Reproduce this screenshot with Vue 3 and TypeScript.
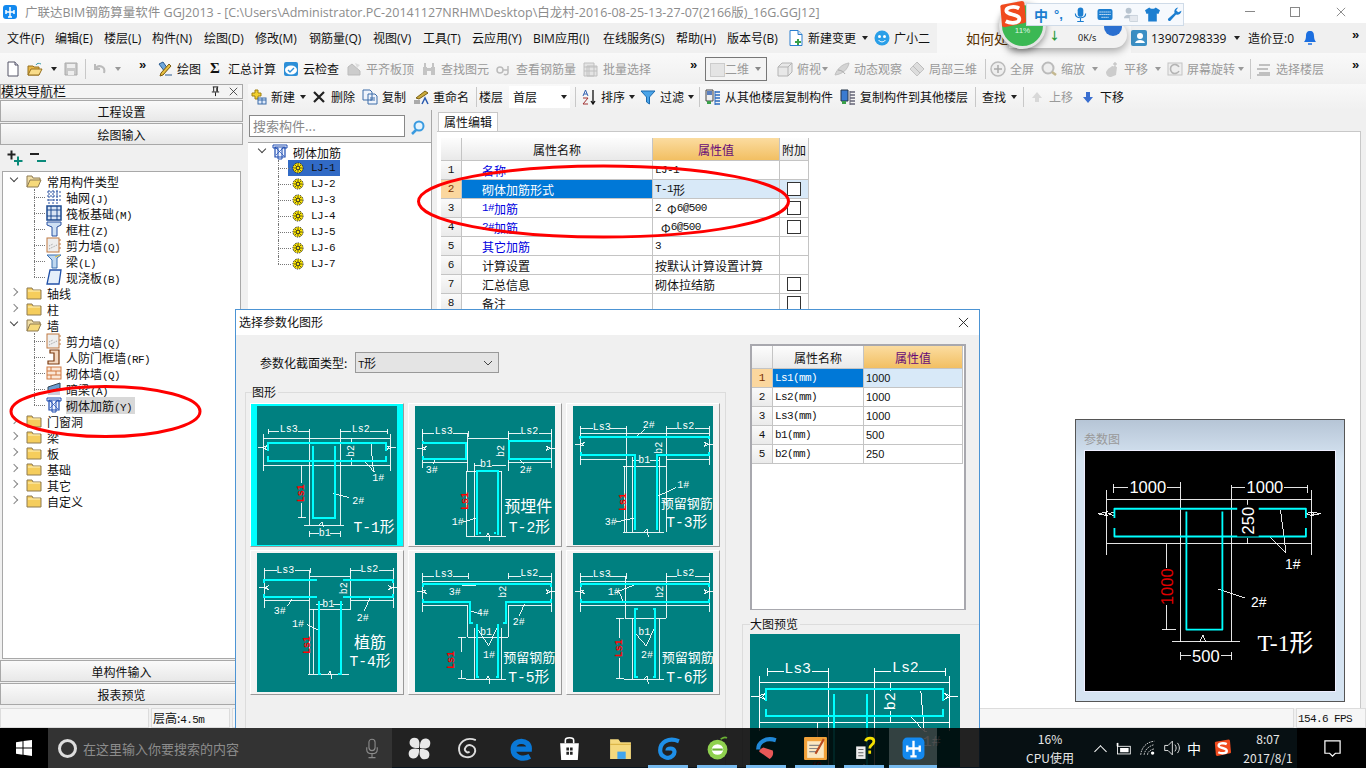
<script setup lang="ts">
interface Cell { x: number; i?: string; t?: string; c?: boolean; g?: boolean; sep?: boolean; m?: boolean; cls?: string }
function row(items: Cell[], end: number) {
  return items.map((it, n) => ({ ...it, w: (items[n + 1] ? items[n + 1].x : end) - it.x }))
}
function seg(s: string) {
  return s.split(/([\x00-\x7f]+)/).filter(Boolean).map(p => ({ t: p, l: /^[\x00-\x7f]/.test(p) }))
}
const menuLeft = ['文件(F)', '编辑(E)', '楼层(L)', '构件(N)', '绘图(D)', '修改(M)', '钢筋量(Q)', '视图(V)', '工具(T)', '云应用(Y)', 'BIM应用(I)', '在线服务(S)', '帮助(H)', '版本号(B)']
const menuX = [7, 55, 104, 152, 204, 255, 309, 373, 423, 472, 533, 603, 676, 727]
const menuCells = row([
  { x: 0 },
  ...menuLeft.map((t, n) => ({ x: menuX[n], t })),
  { x: 788, i: 'change', t: '新建变更' }, { x: 861, c: true },
  { x: 874, i: 'xiao', t: '广小二' }, { x: 937, cls: 'tip', t: '如何处' },
  { x: 1131, i: 'user', t: '13907298339' }, { x: 1233, c: true }, { x: 1248, t: '造价豆:0' },
  { x: 1302, i: 'bell' }, { x: 1352, m: true },
], 1366)
const tb1 = row([
  { x: 0 }, { x: 5, i: 'newdoc' }, { x: 27, i: 'open' }, { x: 50, c: true }, { x: 63, i: 'save', g: true }, { x: 85, sep: true },
  { x: 92, i: 'undo', g: true }, { x: 114, c: true, g: true }, { x: 139, m: true },
  { x: 157, i: 'draw', t: '绘图' }, { x: 210, cls: 'sig', t: 'Σ' }, { x: 228, t: '汇总计算' }, { x: 283, i: 'cloud', t: '云检查' },
  { x: 346, i: 'align', t: '平齐板顶', g: true }, { x: 421, i: 'find', t: '查找图元', g: true }, { x: 496, i: 'rebarv', t: '查看钢筋量', g: true },
  { x: 583, i: 'batch', t: '批量选择', g: true }, { x: 690, m: true }, { x: 705, cls: 'combo2', t: '二维', c: true },
  { x: 777, i: 'cube', t: '俯视', g: true }, { x: 821, c: true, g: true }, { x: 834, i: 'orbit', t: '动态观察', g: true }, { x: 909, i: 'part', t: '局部三维', g: true },
  { x: 985, sep: true }, { x: 990, i: 'fit', t: '全屏', g: true }, { x: 1041, i: 'zoom', t: '缩放', g: true }, { x: 1091, c: true, g: true },
  { x: 1104, i: 'pan', t: '平移', g: true }, { x: 1154, c: true, g: true }, { x: 1167, i: 'rot', t: '屏幕旋转', g: true }, { x: 1237, c: true, g: true },
  { x: 1250, sep: true }, { x: 1256, i: 'floors', t: '选择楼层', g: true }, { x: 1352, m: true },
], 1366)
const o = 248
const tb2 = row([
  { x: 0 + o }, { x: 251, i: 'newc', t: '新建' }, { x: 299, c: true }, { x: 311, i: 'del', t: '删除' }, { x: 362, i: 'copy', t: '复制' }, { x: 413, i: 'rename', t: '重命名' },
  { x: 476, sep: true }, { x: 479, t: '楼层' }, { x: 509, cls: 'combo3', t: '首层', c: true }, { x: 575, sep: true },
  { x: 581, i: 'sort', t: '排序' }, { x: 628, c: true }, { x: 640, i: 'filter', t: '过滤' }, { x: 687, c: true }, { x: 699, sep: true },
  { x: 705, i: 'cfrom', t: '从其他楼层复制构件' }, { x: 840, i: 'cto', t: '复制构件到其他楼层' }, { x: 975, sep: true },
  { x: 982, t: '查找' }, { x: 1010, c: true }, { x: 1023, sep: true }, { x: 1029, i: 'up', t: '上移', g: true }, { x: 1080, i: 'down', t: '下移' },
], 1366)
const nav = [
  { t: '常用构件类型', l: 0, i: 'fopen', open: true },
  { t: '轴网(J)', l: 1, i: 'tgrid' }, { t: '筏板基础(M)', l: 1, i: 'traft' }, { t: '框柱(Z)', l: 1, i: 'tcol' }, { t: '剪力墙(Q)', l: 1, i: 'twall' }, { t: '梁(L)', l: 1, i: 'tbeam' }, { t: '现浇板(B)', l: 1, i: 'tslab', last: true },
  { t: '轴线', l: 0, i: 'fclosed' }, { t: '柱', l: 0, i: 'fclosed' },
  { t: '墙', l: 0, i: 'fopen', open: true },
  { t: '剪力墙(Q)', l: 1, i: 'twall' }, { t: '人防门框墙(RF)', l: 1, i: 'tdoor' }, { t: '砌体墙(Q)', l: 1, i: 'tbrick' }, { t: '暗梁(A)', l: 1, i: 'tdark' }, { t: '砌体加筋(Y)', l: 1, i: 'trebar', last: true, sel: true },
  { t: '门窗洞', l: 0, i: 'fclosed' }, { t: '梁', l: 0, i: 'fclosed' }, { t: '板', l: 0, i: 'fclosed' }, { t: '基础', l: 0, i: 'fclosed' }, { t: '其它', l: 0, i: 'fclosed' }, { t: '自定义', l: 0, i: 'fclosed' },
]
const items = ['LJ-1', 'LJ-2', 'LJ-3', 'LJ-4', 'LJ-5', 'LJ-6', 'LJ-7']
const props = [
  { n: '名称', v: 'LJ-1', blue: true, ck: false },
  { n: '砌体加筋形式', v: 'T-1形', ck: true, sel: true },
  { n: '1#加筋', v: '2 Φ6@500', blue: true, ck: true },
  { n: '2#加筋', v: ' Φ6@500', blue: true, ck: true },
  { n: '其它加筋', v: '3', blue: true, ck: false },
  { n: '计算设置', v: '按默认计算设置计算', ck: false },
  { n: '汇总信息', v: '砌体拉结筋', ck: true },
  { n: '备注', v: '', ck: true },
]
const params = [['Ls1(mm)', '1000'], ['Ls2(mm)', '1000'], ['Ls3(mm)', '1000'], ['b1(mm)', '500'], ['b2(mm)', '250']]
type Tx = [string, number, number, number?, number?, string?]
const brk = (x: number, y: number, d: number) => `M${x} ${y}h${d * 14}l${d * 14} -6 ${-d * 6} 6 ${d * 6} 6 ${-d * 14} -6`
const t1 = {
  vb: '63 30 420 417',
  w: `M97 98V114M97 105H130M186 105H220M220 98V388M313 98V388M313 105H345M402 105H455M455 98V114M82 115V225M463 115V225M82 127H463M82 208H463M345 127V145M345 185V208M205 388H325M220 405V422M220 413H248M283 413H313M313 405V422M197 208V262M197 320V365M187 365H210${brk(65, 155, 1)}${brk(480, 155, -1)}M250 388l8 -10 4 14M290 292L340 305M405 145L412 225L385 196M417 225L412 225`,
  c: 'M95 165V141H450V165M95 180V195H450V180M231 150V365H297V150',
  tx: [['Ls3', 158, 100], ['Ls2', 374, 99], ['b2', 345, 165, 30, -90], ['1#', 427, 247], ['2#', 367, 316], ['b1', 266, 413], ['Ls1', 197, 292, 30, -90, 'r'], ['T-1形', 414, 395, 44]] as Tx[],
}
const thumbs = [
  t1,
  {
    vb: '537 30 420 417',
    w: `M560 105V122M560 113H595M650 113H697M697 105V122M817 105V122M817 113H855M908 113H947M947 105V122M695 127H817M695 113V225M817 113V225M560 200H695M817 200H947M560 100V215M947 100V215M715 200V420M797 225V420M690 225H797M690 420H810M690 225V420M715 207H735M768 207H810${brk(543, 157, 1)}${brk(958, 157, -1)}M750 420l8 -10 4 24M600 185L590 205M845 185L865 205M682 378L722 366`,
    c: 'M562 135V140H690V188H560V180M945 135H820V188H945M722 418V225H787V418M728 410H735M780 410H773',
    tx: [['Ls3', 623, 105], ['Ls2', 880, 105], ['3#', 587, 222], ['2#', 869, 222], ['b1', 750, 205], ['b2', 797, 165, 30, -90], ['1#', 665, 378], ['Ls1', 689, 315, 30, -90, 'r'], ['预埋件', 877, 335, 48], ['T-2形', 880, 395, 44]] as Tx[],
  },
  {
    vb: '1011 30 420 417',
    w: `M1033 90V208M1033 98H1070M1122 98H1172M1172 90V106M1290 90V106M1290 98H1322M1376 98H1420M1420 90V208M1033 112H1420M1033 190H1170M1290 190H1420M1170 98V408M1290 98V408M1160 210H1290M1160 408H1285M1190 192H1210M1242 192H1270M1190 182V408M1270 182V408M1228 100L1193 127M1320 275L1260 303M1140 378L1195 366M1165 210V408${brk(1017, 145, 1)}${brk(1432, 145, -1)}M1225 408l8 -10 4 24`,
    c: 'M1033 130V122H1420V130M1035 168V178H1197V402M1420 168V178H1262V402',
    tx: [['Ls3', 1097, 93], ['Ls2', 1348, 90], ['2#', 1238, 87], ['b1', 1225, 192], ['b2', 1272, 155, 30, -90], ['1#', 1342, 267], ['3#', 1124, 378], ['Ls1', 1162, 318, 30, -90, 'r'], ['预留钢筋', 1352, 325, 39], ['T-3形', 1352, 380, 44]] as Tx[],
  },
  {
    vb: '63 474 420 417',
    w: `M85 520V640M85 527H122M176 527H222M222 520V535M343 520V535M343 527H375M428 527H472M472 520V640M222 543H343M85 617H220M345 617H472M220 527V838M343 527V645M220 643H343M215 838H338M240 628H262M292 628H320M168 612L155 632M402 607L385 648M212 687L250 708M233 643V838${brk(70, 578, 1)}${brk(485, 578, -1)}M275 838l8 -10 4 24`,
    c: 'M85 565V554H242M85 598V607H242M322 554H472V565M322 607H472V598M248 618V836H256M315 618V836H307',
    tx: [['Ls3', 148, 525], ['Ls2', 400, 522], ['3#', 131, 648], ['2#', 380, 669], ['b1', 277, 628], ['b2', 327, 580, 30, -90], ['1#', 186, 687], ['Ls1', 214, 750, 30, -90, 'r'], ['植筋', 402, 748, 48], ['T-4形', 402, 800, 44]] as Tx[],
  },
  {
    vb: '537 474 420 417',
    w: `M560 535V650M560 543H595M650 543H697M697 535V552M817 535V552M817 543H855M908 543H947M947 535V650M560 558H947M560 630H695M817 630H947M695 630V727M817 630V727M695 727H817M715 700V852M797 700V852M690 852H810M665 727H690M665 850H690M675 727V770M675 825V850M678 572L720 570M705 648L722 654M865 628L850 662M720 695L758 752L785 695${brk(543, 590, 1)}${brk(958, 590, -1)}M750 852l8 -10 4 24`,
    c: 'M562 575V567H945V575M560 612V622H703V685H712M945 612V622H810V685H800M722 688V845H730M787 688V845H779',
    tx: [['Ls3', 623, 538], ['Ls2', 880, 535], ['3#', 656, 592], ['4#', 740, 654], ['2#', 848, 681], ['b1', 750, 712], ['b2', 803, 590, 30, -90], ['1#', 759, 780], ['Ls1', 646, 795, 30, -90, 'r'], ['预留钢筋', 880, 790, 39], ['T-5形', 878, 850, 44]] as Tx[],
  },
  {
    vb: '1011 474 420 417',
    w: `M1033 535V650M1033 543H1070M1122 543H1172M1172 535V552M1291 535V552M1291 543H1322M1376 543H1420M1420 535V650M1033 558H1420M1033 630H1420M1168 543V670M1291 543V670M1168 670H1291M1190 670V852M1270 670V852M1165 852H1285M1140 670H1165M1140 850H1165M1150 670V730M1150 790V850M1140 592L1195 570M1150 590L1160 618M1198 715L1230 752L1258 695${brk(1017, 590, 1)}${brk(1432, 590, -1)}M1225 852l8 -10 4 24`,
    c: 'M1035 575V567H1420V575M1035 612V622H1420V612M1205 642H1197V845H1205M1250 642H1258V845H1250',
    tx: [['Ls3', 1097, 538], ['Ls2', 1348, 535], ['1#', 1133, 592], ['b1', 1225, 712], ['b2', 1275, 590, 30, -90], ['2#', 1233, 780], ['Ls1', 1152, 760, 30, -90, 'r'], ['预留钢筋', 1355, 790, 39], ['T-6形', 1352, 850, 44]] as Tx[],
  },
]
const centers = [419, 467, 521, 569, 620, 668, 717, 766, 815, 864, 913]
const icons = ['kpin', 'kspiral', 'kedge', 'kstore', 'kfolder', 'kg', 'kie', 'kred', 'knote', 'khelp', 'logo']
const pins = centers.map((c, n) => ({ c, i: icons[n], on: n > 4, active: n === 10, ml: n ? c - centers[n - 1] - 48 : 3 }))
</script>

<template>
  <div class="root">
    <svg class="defs" width="0" height="0" aria-hidden="true">
      <symbol id="logo" viewBox="0 0 16 16"><rect x="1" y="1" width="14" height="14" rx="3" fill="#1389ef"/><path d="M8 3v10M4 8h8M4 6v4M12 6v4M6 13h4" stroke="#fff" stroke-width="1.500" fill="none"/></symbol>
      <symbol id="xx" viewBox="0 0 12 12"><path d="M1 1l10 10M11 1L1 11" stroke="currentColor" fill="none"/></symbol>
      <symbol id="pinic" viewBox="0 0 12 12"><path d="M3 1h6M4 1v5M8 1v5M2 6.500h8M6 7v4" stroke="#111" fill="none"/><path d="M7 2h1v4H7z" fill="#111"/></symbol>
      <symbol id="pp" viewBox="0 0 16 16"><path d="M4.500 0.500v9M0.500 4.500h8" stroke="#222" stroke-width="2" fill="none"/><path d="M11 6.500v9M7 11h8.500" stroke="#0a8a7a" stroke-width="2" fill="none"/></symbol>
      <symbol id="mm" viewBox="0 0 16 16"><path d="M0 4h9" stroke="#222" stroke-width="2"/><path d="M7 11h9" stroke="#0a8a7a" stroke-width="2"/></symbol>
      <symbol id="newdoc" viewBox="0 0 16 16"><path d="M3 1h7l3 3v11H3z" fill="#fff" stroke="#556"/><path d="M10 1v3h3" fill="#dde" stroke="#556"/></symbol>
      <symbol id="open" viewBox="0 0 16 16"><path d="M1 14V5h5l1 1h5v8z" fill="#e8b84a" stroke="#96701e"/><path d="M1 14l3-6h11l-3 6z" fill="#f8dc8a" stroke="#96701e"/><path d="M9 4c1-2 3-2 5-1" stroke="#39a" fill="none"/></symbol>
      <symbol id="save" viewBox="0 0 16 16"><path d="M2 2h12v12H2z" fill="#c8c8c8" stroke="#aaa"/><path d="M4 3h8v4H4zM5 10h6v4H5z" fill="#eee"/></symbol>
      <symbol id="undo" viewBox="0 0 16 16"><path d="M3 3v5h5M3.500 8C6 3 14 5 12 12" stroke="#bbb" stroke-width="2" fill="none"/></symbol>
      <symbol id="draw" viewBox="0 0 16 16"><path d="M2 3l4-2 5 7-3 3z" fill="#6fa8dc" stroke="#2a5a90"/><path d="M14 5L6 14l-3 1 1-3 8-9z" fill="#e8c040" stroke="#7a5a10"/><path d="M8 14h7" stroke="#2a5a90"/></symbol>
      <symbol id="cloud" viewBox="0 0 16 16"><rect x="1" y="1" width="14" height="14" rx="2" fill="#2d8fd8"/><ellipse cx="8" cy="9" rx="6" ry="4.500" fill="#fff"/><path d="M5 9l2 2 4-4" stroke="#2d8fd8" stroke-width="1.400" fill="none"/></symbol>
      <symbol id="align" viewBox="0 0 16 16"><path d="M2 14h12V10L6 3 2 6z" fill="#ccc" stroke="#bbb"/><path d="M9 2l5 2-3 3z" fill="#ddd"/></symbol>
      <symbol id="find" viewBox="0 0 16 16"><path d="M2 6h4v8H2zM10 6h4v8h-4zM3 2h2v4H3zM11 2h2v4h-2zM6 7h4v3H6z" fill="#c4c4c4"/></symbol>
      <symbol id="rebarv" viewBox="0 0 16 16"><circle cx="4" cy="9" r="3" fill="none" stroke="#bbb" stroke-width="1.500"/><path d="M7 9h5M12 5v7c0 2-3 2-4 1" stroke="#bbb" stroke-width="1.500" fill="none"/></symbol>
      <symbol id="batch" viewBox="0 0 16 16"><path d="M1 2h10v13H1zM4 5h10v10H4z" fill="#e4e4e4" stroke="#c0c0c0"/><path d="M1 6h13M1 10h13M6 5v10" stroke="#c0c0c0"/></symbol>
      <symbol id="cube" viewBox="0 0 16 16"><path d="M1 6l4-4h10v9l-4 4H1zM1 6h10v9M11 6l4-4" fill="#e8e8e8" stroke="#b4b4b4"/></symbol>
      <symbol id="orbit" viewBox="0 0 16 16"><path d="M1 14C3 8 8 3 15 2c-1 6-6 11-14 12z" fill="#d4d4d4" stroke="#c0c0c0"/><path d="M4 9c3 0 6 2 7 4" stroke="#aaa" fill="none"/></symbol>
      <symbol id="part" viewBox="0 0 16 16"><path d="M1 8l7-7 7 7-7 7z" fill="#ddd" stroke="#c4c4c4"/><path d="M4 5l7 7M8 1l7 7" stroke="#bbb"/></symbol>
      <symbol id="fit" viewBox="0 0 16 16"><circle cx="8" cy="8" r="7" fill="#eee" stroke="#bbb" stroke-width="1.500"/><path d="M8 4v8M4 8h8" stroke="#aaa" stroke-width="1.500"/></symbol>
      <symbol id="zoom" viewBox="0 0 16 16"><circle cx="7" cy="7" r="5.500" fill="#eee" stroke="#bbb" stroke-width="2"/><path d="M11 11l4 3" stroke="#c4b890" stroke-width="2.500"/></symbol>
      <symbol id="pan" viewBox="0 0 16 16"><path d="M2 11c2-4 4-4 6-6l5 1-1 8-5 2c-3 0-5-2-5-5z" fill="#ccc"/><path d="M11 1v5M9 3h4" stroke="#bbb"/></symbol>
      <symbol id="rot" viewBox="0 0 16 16"><rect x="1" y="2" width="14" height="12" fill="#eee" stroke="#c4c4c4"/><path d="M12 6a4.500 4.500 0 1 0 0 4" stroke="#b4b4b4" stroke-width="1.600" fill="none"/></symbol>
      <symbol id="floors" viewBox="0 0 16 16"><path d="M3 4h11M1 8h11M3 12h11M1 14h13" stroke="#c0c0c0" stroke-width="2"/></symbol>
      <symbol id="newc" viewBox="0 0 16 16"><path d="M1 4h3V1h3v3h3v3H7v3H4V7H1z" fill="#f2d02e" stroke="#a08010"/><rect x="7" y="9" width="8" height="6" fill="#dfeafa" stroke="#3d6ca8"/><path d="M7 11h8M11 9v6" stroke="#3d6ca8"/></symbol>
      <symbol id="del" viewBox="0 0 16 16"><path d="M3 3l10 10M13 3L3 13" stroke="#222" stroke-width="2.200"/></symbol>
      <symbol id="copy" viewBox="0 0 16 16"><path d="M1 1h7l2 2v8H1zM6 5h7l2 2v8H6z" fill="#eef3fb" stroke="#3d6ca8"/><path d="M8 9h5M8 11h5" stroke="#3d6ca8"/></symbol>
      <symbol id="rename" viewBox="0 0 16 16"><path d="M3 9l9-7 3 2-9 6z" fill="#c9a93a" stroke="#7a6015"/><rect x="1" y="11" width="6" height="4" fill="#aaa"/><path d="M9 15l3-6 3 6" stroke="#2a5bb0" stroke-width="1.500" fill="none"/></symbol>
      <symbol id="sort" viewBox="0 0 16 16"><path d="M2 7l2.500-6L7 7M3 5h3" stroke="#3060b0" fill="none"/><path d="M2 9h5l-5 6h5" stroke="#a03030" fill="none"/><path d="M12 1v13M10 12l2 3 2-3" stroke="#111" stroke-width="1.300" fill="none"/></symbol>
      <symbol id="filter" viewBox="0 0 16 16"><path d="M1 2h14L9.500 8v7L6.500 13V8z" fill="#4aa4e8" stroke="#1c6bb0"/></symbol>
      <symbol id="cfrom" viewBox="0 0 16 16"><path d="M1 1h7v11H1z" fill="#eee" stroke="#444"/><path d="M2 3h5M2 5h5" stroke="#2a5bb0" stroke-width="1.400"/><path d="M2 12h4v3H2z" fill="#3aa04a"/><path d="M10 3h5M10 6h5M10 9h5M10 12h5M10 15h5" stroke="#2a6bc0" stroke-width="1.500"/><path d="M10 2v14" stroke="#2a6bc0"/></symbol>
      <symbol id="cto" viewBox="0 0 16 16"><path d="M1 1h7v11H1z" fill="#3a7bd0" stroke="#234"/><path d="M2 12h4v3H2z" fill="#3aa04a"/><path d="M10 3h5M10 6h5M10 9h5M10 12h5M10 15h5" stroke="#667" stroke-width="1.500"/><path d="M10 2v14" stroke="#667"/></symbol>
      <symbol id="up" viewBox="0 0 16 16"><path d="M8 3l5 6h-3v4H6V9H3z" fill="#d8d8d8"/></symbol>
      <symbol id="down" viewBox="0 0 16 16"><path d="M6 3h4v5h3l-5 6-5-6h3z" fill="#3a6fd0"/></symbol>
      <symbol id="change" viewBox="0 0 16 16"><path d="M2 0.500h8l4 4V15.500H2z" fill="#fff" stroke="#2a7fd0"/><path d="M10 0.500v4h4" fill="#cde" stroke="#2a7fd0"/><path d="M9 9h2v2h2v2h-2v2H9v-2H7v-2h2z" fill="#3aa04a"/></symbol>
      <symbol id="xiao" viewBox="0 0 16 16"><circle cx="8" cy="8" r="7.500" fill="#2a9fe8"/><circle cx="5.500" cy="6.500" r="1.500" fill="#fff"/><circle cx="10.500" cy="6.500" r="1.500" fill="#fff"/><path d="M4.500 10c2 2.500 5 2.500 7 0" stroke="#fff" fill="none"/></symbol>
      <symbol id="user" viewBox="0 0 16 16"><rect width="16" height="16" rx="2" fill="#3b8fc4"/><circle cx="9" cy="6" r="3" fill="#fff"/><path d="M4 13c1-4 9-4 10 0z" fill="#fff"/></symbol>
      <symbol id="bell" viewBox="0 0 16 16"><path d="M8 1c3 0 4 2 4 5 0 3 1 5 2 6H2c1-1 2-3 2-6 0-3 1-5 4-5z" fill="#1c6fe0"/><path d="M6 14h4" stroke="#1c6fe0" stroke-width="1.500"/></symbol>
      <symbol id="search" viewBox="0 0 16 16"><circle cx="9" cy="6" r="4.500" fill="#e4f4ff" stroke="#3a9be0" stroke-width="2"/><path d="M6 10l-4 4" stroke="#3a9be0" stroke-width="2.500"/></symbol>
      <symbol id="fclosed" viewBox="0 0 16 16"><path d="M1 3h5l1 2h8v9H1z" fill="#f5cd5c" stroke="#8e7a50"/><path d="M2 6h12" stroke="#fff3c0"/></symbol>
      <symbol id="fopen" viewBox="0 0 16 16"><path d="M1 14V3h5l1 2h7v2" fill="#f2e0a8" stroke="#8e7a50"/><path d="M1 14l3-7h11l-3 7z" fill="#f6d97a" stroke="#8e7a50"/></symbol>
      <symbol id="tgrid" viewBox="0 0 16 16"><path d="M3 1v14M7 1v14M11 1v14M1 3h14M1 7h14M1 11h14" stroke="#2850a0" stroke-dasharray="2 1"/></symbol>
      <symbol id="traft" viewBox="0 0 16 16"><rect x="1" y="1" width="14" height="14" fill="#d8e4f4" stroke="#1c4a90" stroke-width="1.500"/><path d="M1 5h14M1 11h14M5 1v14M11 1v14" stroke="#1c4a90"/></symbol>
      <symbol id="tcol" viewBox="0 0 16 16"><path d="M1 1h14v3l-4 2v9H6V6L1 4z" fill="#cfe0f4" stroke="#2850a0"/></symbol>
      <symbol id="twall" viewBox="0 0 16 16"><rect x="1" y="1" width="12" height="14" fill="#eee" stroke="#c07840"/><path d="M3 12l8-4M3 9l4-2" stroke="#999" stroke-dasharray="1 1"/><path d="M13 3h2M13 7h2M13 11h2" stroke="#c07840"/></symbol>
      <symbol id="tbeam" viewBox="0 0 16 16"><path d="M1 2h14l-4 3v10H6V7z" fill="#bfd8f0" stroke="#3a70b0"/><path d="M9 4l5-2" stroke="#ddc040"/></symbol>
      <symbol id="tslab" viewBox="0 0 16 16"><path d="M4 1h11l-2 14H1z" fill="#e4effa" stroke="#2050a8" stroke-width="1.300"/></symbol>
      <symbol id="tdoor" viewBox="0 0 16 16"><path d="M4 1h9v14H2v-3h6V4H4z" fill="#f4d8c0" stroke="#7a3a10" stroke-width="1.200"/></symbol>
      <symbol id="tbrick" viewBox="0 0 16 16"><rect x="1" y="2" width="14" height="12" fill="#fbe8d8" stroke="#d07840"/><path d="M1 6h14M1 10h14M5 2v4M10 6v4M5 10v4" stroke="#d07840"/></symbol>
      <symbol id="tdark" viewBox="0 0 16 16"><path d="M2 6l12-4v5L2 11z" fill="#6a9cd0" stroke="#345"/><path d="M2 11l12-4v7H2z" fill="#ccd"/></symbol>
      <symbol id="trebar" viewBox="0 0 16 16"><path d="M3 3h10v10H3z" fill="#eef4ff" stroke="#1c4ab0" stroke-width="1.200"/><path d="M1 1h14v3H10v11H6V4H1z" fill="none" stroke="#1c4ab0"/><path d="M3 3l9 9M12 3L4 11" stroke="#1c4ab0" stroke-width="0.700"/></symbol>
      <symbol id="gear" viewBox="0 0 12 12"><circle cx="6" cy="6" r="5" fill="#ffe800" stroke="#222" stroke-dasharray="1.500 1"/><path d="M2 6h8M6 2v8M3 3l6 6M9 3L3 9" stroke="#222" stroke-width="0.700"/><circle cx="6" cy="6" r="1.800" fill="#ffe800" stroke="#222" stroke-width="0.800"/></symbol>
      <symbol id="mic" viewBox="0 0 16 24"><rect x="4.500" y="2" width="7" height="13" rx="3.500" fill="none" stroke="#8a8a8a" stroke-width="1.300"/><path d="M2 11v3c0 6 12 6 12 0v-3M8 19v4M4 23h8" stroke="#8a8a8a" stroke-width="1.300" fill="none"/></symbol>
      <symbol id="kpin" viewBox="0 0 24 24"><path d="M11.500 11.500C6 12 2 10 2.500 5.500S8 1 10 2.500s2.500 5 1.500 9zM12.500 11.500C12 6 14 2 18.500 2.500S23 8 21.500 10s-5 2.500-9 1.500zM12.500 12.500C18 12 22 14 21.500 18.500S16 23 14 21.500s-2.500-5-1.500-9zM11.500 12.500C12 18 10 22 5.500 21.500S1 16 2.500 14s5-2.500 9-1.500z" fill="#e8e8e8"/></symbol>
      <symbol id="kspiral" viewBox="0 0 24 24"><path d="M20 4C10 0 3 7 4 14c1 7 12 9 15 2 2-6-6-10-9-5-2 3 2 6 4 4" stroke="#ddd" stroke-width="1.800" fill="none"/></symbol>
      <symbol id="kedge" viewBox="0 0 24 24"><path d="M4 12.500h15.500C20 3 4 2 4 13c0 8 10 10 16 6.500" stroke="#0a78d6" stroke-width="5" fill="none"/></symbol>
      <symbol id="kstore" viewBox="0 0 24 24"><path d="M3 7h18l-1 16H4z" fill="#fff"/><path d="M8 7V4c0-3 8-3 8 0v3" stroke="#fff" stroke-width="1.500" fill="none"/><path d="M9 11h2.500v3H9zM12.500 11H15v3h-2.500zM9 15h2.500v3H9zM12.500 15H15v3h-2.500z" fill="#222"/></symbol>
      <symbol id="kfolder" viewBox="0 0 24 24"><path d="M2 3h8l2 3h10v16H2z" fill="#f5d97e"/><path d="M2 8h20" stroke="#d8b040"/><rect x="9" y="15" width="8" height="7" fill="#41a5ee"/></symbol>
      <symbol id="kg" viewBox="0 0 24 24"><path d="M22 5C12 1 4 6 4 14c0 6 8 9 12 5 3-3 2-7-2-7-2 0-3 1-3 2" stroke="#1e8fe8" stroke-width="4" fill="none"/></symbol>
      <symbol id="kie" viewBox="0 0 24 24"><circle cx="12" cy="13" r="9.500" fill="#8fd14f"/><ellipse cx="12" cy="13" rx="5.500" ry="5" fill="#fff"/><path d="M7 13h10" stroke="#6ab034" stroke-width="2"/><path d="M15 3c3-2 5-2 6-1" stroke="#6ab034" stroke-width="1.500" fill="none"/></symbol>
      <symbol id="kred" viewBox="0 0 24 24"><path d="M21 4C11 1 4 6 4 13" stroke="#2088d8" stroke-width="4" fill="none"/><path d="M5 15l10 7c3-2 4-5 3-8l-9-3c-2 1-4 2-4 4z" fill="#e85858"/></symbol>
      <symbol id="knote" viewBox="0 0 24 24"><rect x="1" y="1" width="22" height="22" rx="1" fill="#f2a23a"/><rect x="4" y="5" width="16" height="16" fill="#fae7c2"/><path d="M6 9h10M6 12h10M6 15h8" stroke="#888"/><path d="M20 3L12 17" stroke="#b84a20" stroke-width="2"/></symbol>
      <symbol id="khelp" viewBox="0 0 24 24"><rect x="4" y="10" width="9" height="12" fill="#eee"/><path d="M6 13h5M6 16h5M6 19h5" stroke="#666"/><path d="M13 5c1-4 8-4 8 0s-4 3-4 7M17 14v3" stroke="#f5e000" stroke-width="2.600" fill="none"/></symbol>
      <symbol id="win" viewBox="0 0 16 16"><path d="M0 2.300l6.500-1v6.200H0zM7.500 1.100L16 0v7.500H7.500zM0 8.500h6.500v6.200l-6.500-1zM7.500 8.500H16V16l-8.500-1.200z" fill="#fff"/></symbol>
      <symbol id="batt" viewBox="0 0 20 20"><path d="M3 4v4" stroke="#fff" stroke-width="2"/><rect x="3" y="8" width="15" height="9" fill="none" stroke="#fff"/><rect x="6" y="10" width="10" height="5" fill="#fff"/></symbol>
      <symbol id="wifi" viewBox="0 0 20 20"><path d="M2 18C3 9 9 3 18 2M6 18c1-6 5-10 12-12M10 18c0-3 3-6 8-7" stroke="#e4e4e4" fill="none" stroke-dasharray="2 1"/><circle cx="16" cy="16" r="2" fill="#fff"/></symbol>
      <symbol id="snd" viewBox="0 0 20 20"><path d="M2 7h4l5-5v16l-5-5H2z" fill="none" stroke="#fff"/><path d="M14 6c2 3 2 5 0 8M17 4c3 4 3 8 0 12" stroke="#fff" fill="none"/></symbol>
      <symbol id="notif" viewBox="0 0 20 20"><path d="M2 2h16v13H13l-3 3-3-3H2z" fill="none" stroke="#fff" stroke-width="1.300"/></symbol>
      <symbol id="sg" viewBox="0 0 20 20"><path d="M1 4q0-1 1-1.300L17 0q1.500 0 1.800 1.500L20 15q0 1-1 1.300L4 19.500q-1.500 0-1.800-1.500z" fill="#f04a1e"/><path d="M15 5.500C11 3.500 5 4.500 5.500 7.500s9 2 9.500 5.500-6 4-10 2" stroke="#fff" stroke-width="2.800" fill="none"/></symbol>
      <symbol id="imic" viewBox="0 0 14 16"><rect x="4" y="0.500" width="6" height="10" rx="3" fill="#1c7ed0"/><path d="M1.500 7c0 6 11 6 11 0M7 12v3M3.500 15.500h7" stroke="#1c7ed0" stroke-width="1.200" fill="none"/></symbol>
      <symbol id="ikbd" viewBox="0 0 16 12"><rect x="0.500" y="0.500" width="15" height="11" rx="2" fill="#1c7ed0"/><path d="M2.500 3.500h11M2.500 6h11M4.500 8.800h7" stroke="#fff" stroke-dasharray="1.200 0.800"/></symbol>
      <symbol id="iper" viewBox="0 0 16 16"><circle cx="6" cy="4" r="3.200" fill="#b8c4d0"/><path d="M1 12c0-5 9-5 10 0z" fill="#b8c4d0"/><rect x="7" y="9" width="9" height="6.500" rx="1" fill="#e4e8ee" stroke="#b8c4d0" stroke-width="0.700"/></symbol>
      <symbol id="ishirt" viewBox="0 0 14 14"><path d="M4 0.500L0 3l1.500 3.500L3 6v7.500h8V6l1.500 0.500L14 3 10 0.500C9 2 5 2 4 0.500z" fill="#1c7ed0"/></symbol>
      <symbol id="iwr" viewBox="0 0 14 14"><path d="M13.500 3.500A3.800 3.800 0 0 1 8.500 7L3 13a1.500 1.500 0 0 1-2-2l6-5.500A3.800 3.800 0 0 1 10.500 0.500L8.500 3l2 2z" fill="#1c7ed0"/></symbol>
    </svg>

    <div class="title"><svg class="ic"><use href="#logo"/></svg><span>广联达BIM钢筋算量软件 GGJ2013 - [C:\Users\Administrator.PC-20141127NRHM\Desktop\白龙村-2016-08-25-13-27-07(2166版)_16G.GGJ12]</span>
      <div class="wbtns"><i class="wmin"></i><i class="wmax"></i><svg class="xbtn"><use href="#xx"/></svg></div>
    </div>
    <div class="bar menu">
      <div v-for="(it, k) in menuCells" :key="k" class="cell" :class="it.cls" :style="{ width: it.w + 'px' }">
        <svg v-if="it.i" class="ic"><use :href="'#' + it.i"/></svg><span v-if="it.t">{{ it.t }}</span><i v-if="it.c" class="caret"></i><b v-if="it.m" class="more">»</b>
      </div>
    </div>
    <div class="bar tb1">
      <div v-for="(it, k) in tb1" :key="k" class="cell" :class="[it.cls, { g: it.g }]" :style="{ width: it.w + 'px' }">
        <svg v-if="it.i" class="ic"><use :href="'#' + it.i"/></svg><span v-if="it.t">{{ it.t }}</span><i v-if="it.c" class="caret"></i><i v-if="it.sep" class="sep"></i><b v-if="it.m" class="more">»</b>
      </div>
    </div>

    <div class="main">
      <aside class="nav">
        <div class="navhead"><span>模块导航栏</span><svg class="navpin"><use href="#pinic"/></svg><svg class="navx"><use href="#xx"/></svg></div>
        <button class="navbtn">工程设置</button>
        <button class="navbtn">绘图输入</button>
        <div class="pm"><svg class="ic"><use href="#pp"/></svg><svg class="ic"><use href="#mm"/></svg></div>
        <div class="navtree">
          <div v-for="(r, k) in nav" :key="k" class="nrow" :class="[r.l ? 'child' : 'top', { last: r.last }]">
            <i v-if="!r.l" class="chev" :class="{ open: r.open }"></i>
            <svg class="ic"><use :href="'#' + r.i"/></svg>
            <span class="lab" :class="{ sel: r.sel }"><span v-for="(s, m) in seg(r.t)" :key="m" :class="{ la: s.l }">{{ s.t }}</span></span>
          </div>
        </div>
        <button class="navbtn">单构件输入</button>
        <button class="navbtn">报表预览</button>
      </aside>
      <section class="work">
        <div class="bar tb2">
          <div v-for="(it, k) in tb2" :key="k" class="cell" :class="[it.cls, { g: it.g }]" :style="{ width: it.w + 'px' }">
            <svg v-if="it.i" class="ic"><use :href="'#' + it.i"/></svg><span v-if="it.t">{{ it.t }}</span><i v-if="it.c" class="caret"></i><i v-if="it.sep" class="sep"></i>
          </div>
        </div>
        <div class="workbody">
          <div class="list">
            <div class="searchrow"><div class="search">搜索构件...</div><svg class="ic mag"><use href="#search"/></svg></div>
            <div class="ltree">
              <div class="lroot"><i class="chev open"></i><svg class="ic"><use href="#trebar"/></svg><span>砌体加筋</span></div>
              <div v-for="(n, k) in items" :key="n" class="litem" :class="{ on: k === 0, last: k === 6 }">
                <svg class="gear"><use href="#gear"/></svg><span class="la">{{ n }}</span>
              </div>
            </div>
          </div>
          <div class="props">
            <div class="tabs"><span class="tab">属性编辑</span></div>
            <div class="pane">
              <div class="grid pgrid">
                <div class="gh"></div><div class="gh">属性名称</div><div class="gh val">属性值</div><div class="gh">附加</div>
                <template v-for="(p, k) in props" :key="k">
                  <div class="gc num" :class="{ hot: p.sel }">{{ k + 1 }}</div>
                  <div class="gc name" :class="{ blue: p.blue, picked: p.sel }"><span v-for="(s, m) in seg(p.n)" :key="m" :class="{ la: s.l }">{{ s.t }}</span></div>
                  <div class="gc value" :class="{ pale: p.sel }"><span v-for="(s, m) in seg(p.v)" :key="m" :class="{ la: s.l }">{{ s.t }}</span></div>
                  <div class="gc add" :class="{ pale: p.sel }"><i v-if="p.ck" class="chk"></i></div>
                </template>
              </div>
            </div>
          </div>
        </div>
      </section>
    </div>

    <div class="status">
      <div class="st s1"></div><div class="st s2">层高:<span class="la">4.5m</span></div><div class="st s3"></div><div class="st s4"><span class="la">154.6 FPS</span></div>
    </div>

    <div class="taskbar">
      <div class="start"><svg class="win"><use href="#win"/></svg></div>
      <div class="cortana"><i class="ring"></i><span>在这里输入你要搜索的内容</span><svg class="micic"><use href="#mic"/></svg></div>
      <div class="pins">
        <div v-for="p in pins" :key="p.c" class="pinc" :class="{ on: p.on, active: p.active }" :style="{ marginLeft: p.ml + 'px' }"><svg class="pinic"><use :href="'#' + p.i"/></svg></div>
      </div>
      <div class="tray">
        <div class="cpu"><span>16%</span><span>CPU使用</span></div>
        <i class="upchev"></i>
        <svg class="tr"><use href="#batt"/></svg><svg class="tr"><use href="#wifi"/></svg><svg class="tr"><use href="#snd"/></svg>
        <span class="zh">中</span>
        <svg class="tr"><use href="#sg"/></svg>
        <div class="clock"><span>8:07</span><span>2017/8/1</span></div>
      </div>
      <div class="notif"><svg class="tr"><use href="#notif"/></svg></div>
    </div>

    <div class="dialog">
      <div class="dtitle"><span>选择参数化图形</span><svg class="dx"><use href="#xx"/></svg></div>
      <div class="dbody">
        <div class="dleft">
          <div class="dsel"><span class="dlabel">参数化截面类型:</span><div class="select"><span class="seltxt"><span class="la">T</span>形</span><svg width="10" height="6" viewBox="0 0 10 6"><path d="M1 1l4 4 4-4" stroke="#444" fill="none"/></svg></div></div>
          <div class="shapes">
            <span class="glabel">图形</span>
            <div class="tgrid">
              <div v-for="(t, k) in thumbs" :key="k" class="tcell" :class="{ chosen: k === 0 }">
                <svg class="th" :viewBox="t.vb">
                  <path :d="t.w" class="wl"/><path :d="t.c" class="cy"/>
                  <text v-for="(x, m) in t.tx" :key="m" :x="x[1]" :y="x[2]" :font-size="x[3] || 30" text-anchor="middle" dominant-baseline="central" :fill="x[5] ? '#f00' : '#fff'" :font-weight="x[5] ? 700 : 400" :transform="x[4] ? `rotate(${x[4]} ${x[1]} ${x[2]})` : undefined">{{ x[0] }}</text>
                </svg>
              </div>
            </div>
          </div>
        </div>
        <div class="dright">
          <div class="pframe">
            <div class="grid dgrid">
              <div class="gh"></div><div class="gh">属性名称</div><div class="gh val">属性值</div>
              <template v-for="(p, k) in params" :key="k">
                <div class="gc num" :class="{ hot: k === 0 }">{{ k + 1 }}</div>
                <div class="gc dn" :class="{ picked: k === 0 }"><span class="la">{{ p[0] }}</span></div>
                <div class="gc dv" :class="{ pale: k === 0 }">{{ p[1] }}</div>
              </template>
            </div>
          </div>
          <div class="bigbox">
            <span class="glabel big">大图预览</span>
            <svg class="bigth" :viewBox="t1.vb">
              <path :d="t1.w" class="wl"/><path :d="t1.c" class="cy"/>
              <text v-for="(x, m) in t1.tx" :key="m" :x="x[1]" :y="x[2]" :font-size="x[3] || 30" text-anchor="middle" dominant-baseline="central" :fill="x[5] ? '#f00' : '#fff'" :transform="x[4] ? `rotate(${x[4]} ${x[1]} ${x[2]})` : undefined">{{ x[0] }}</text>
            </svg>
          </div>
        </div>
      </div>
    </div>

    <div class="pwin">
      <div class="ptitle">参数图</div>
      <svg class="canvas" viewBox="42 122 755 727">
        <path class="pw" d="M127 222V250M127 232H172M290 232H331M331 215V700M485 225V700M485 232H525M645 232H716M716 225V250M107 240V437M727 240V437M107 268H727M107 403H727M288 405V475M288 590V663M275 663H315M305 700H510M388 700l10 -20 8 20M331 742H362M452 742H485M331 730V755M485 730V755M633 300L650 432L600 380M445 540L525 567M80 312l30 -6 -10 6 10 6 -30 -6M112 312l18 -6V318zM755 312l-30 -6 10 6 -10 6 30 -6M710 312l18 -6V318zM534 270V285M534 385V403"/>
        <path class="pc" d="M130 325V297H710V325M130 355V381H710V355M348 305V663H457V305"/>
        <rect x="502" y="285" width="65" height="96" fill="#000"/>
        <text x="231" y="231" class="pt" font-size="50">1000</text>
        <text x="586" y="231" class="pt" font-size="50">1000</text>
        <text x="535" y="333" class="pt" font-size="50" transform="rotate(-90 535 333)">250</text>
        <text x="670" y="465" class="pt" font-size="42">1#</text>
        <text x="567" y="578" class="pt" font-size="42">2#</text>
        <text x="288" y="533" class="pt red" font-size="50" transform="rotate(-90 288 533)">1000</text>
        <text x="407" y="742" class="pt" font-size="50">500</text>
        <text x="648" y="705" class="pt ser" font-size="72">T-1形</text>
      </svg>
    </div>

    <div class="ime">
      <div class="pill"><span class="arrow">↓</span><span class="speed">0K/s</span><i class="bluedot"></i></div>
      <div class="ball"><span>11%</span></div>
      <div class="imebar"><b class="cn">中</b><span class="imei">°,</span><svg class="ii mic"><use href="#imic"/></svg><svg class="ii kb"><use href="#ikbd"/></svg><svg class="ii"><use href="#iper"/></svg><svg class="ii"><use href="#ishirt"/></svg><svg class="ii"><use href="#iwr"/></svg></div>
      <svg class="slogo" viewBox="0 0 20 20"><use href="#sg"/></svg>
    </div>

    <svg class="rings" width="1366" height="768" viewBox="0 0 1366 768">
      <ellipse cx="603.500" cy="201.500" rx="185" ry="35.500"/>
      <ellipse cx="105.500" cy="411.500" rx="94.500" ry="25"/>
    </svg>
  </div>
</template>

<style>
html, body { margin: 0; background: #f0f0f0; }
</style>

<style scoped>
.root { width: 1366px; height: 768px; position: relative; overflow: hidden; display: flex; flex-direction: column; background: #f0f0f0; font: 12px "Open Sans", "Noto Sans CJK SC", sans-serif; color: #111; }
.defs { position: absolute; }
.ic { width: 16px; height: 16px; flex: none; }
.la { font: 11px "Liberation Mono", monospace; letter-spacing: -.6px; }
.title { height: 23px; background: #fff; display: flex; align-items: center; gap: 7px; padding-left: 2px; color: #8c8c8c; font-size: 12.500px; white-space: nowrap; }
.wbtns { margin-left: auto; display: flex; align-items: center; color: #777; padding-right: 20px; }
.wmin { width: 10px; height: 1px; background: #888; margin-right: 35px; flex: none; }
.wmax { width: 8px; height: 8px; border: 1px solid #888; margin-right: 36px; flex: none; }
.xbtn { width: 10px; height: 10px; color: #777; }
.bar { display: flex; align-items: center; flex: none; }
.menu { height: 30px; background: #f0f0f0; }
.tb1 { height: 31px; background: linear-gradient(#f9f9f9, #f0f0f0); }
.tb2 { height: 26px; background: linear-gradient(#f9f9f9, #f0f0f0); }
.cell { display: flex; align-items: center; gap: 4px; height: 100%; flex: none; white-space: nowrap; position: relative; }
.cell.g { color: #9a9a9a; }
.caret { width: 0; height: 0; border: 3px solid transparent; border-top: 4px solid #222; border-bottom: 0; margin-left: 1px; }
.g .caret { border-top-color: #999; }
.sep { width: 1px; height: 20px; background: #c8c8c8; }
.more { font: 700 13px "Liberation Sans", sans-serif; margin-top: -8px; }
.tip { background: #f8f8f8; color: #5a3000; padding-left: 29px; box-sizing: border-box; font-size: 14px; }
.sig { font: 700 15px "Liberation Serif", serif; }
.combo2 { height: 24px; border: 1px solid #777; box-sizing: border-box; width: 62px !important; margin-right: 10px; padding-left: 19px; color: #999; background: #f4f4f4; }
.combo2::before { content: ""; position: absolute; left: 4px; top: 5px; width: 13px; height: 12px; background: #e4e4e4; border: 1px solid #ccc; }
.combo2 .caret { margin-left: 2px; border-top-color: #888; }
.combo3 { height: 22px; background: #fff; width: 61px !important; margin-right: 5px; box-sizing: border-box; padding-left: 4px; }
.combo3 .caret { margin-left: 20px; }
.main { height: 624px; display: flex; flex: none; }
.nav { width: 243px; flex: none; display: flex; flex-direction: column; padding-bottom: 3px; box-sizing: border-box; }
.navhead { height: 15px; border: 1px solid #a8a8a8; box-sizing: border-box; display: flex; align-items: center; font-size: 13px; line-height: 13px; background: #f4f4f4; flex: none; }
.navpin { width: 11px; height: 11px; margin-left: auto; margin-right: 8px; }
.navx { width: 9px; height: 9px; margin-right: 4px; color: #222; }
.navbtn { height: 22px; margin: 1px 0 0; border: 1px solid #a8a8a8; background: linear-gradient(#fafafa, #e8e8e8); font: 12px "Noto Sans CJK SC", sans-serif; padding: 0; color: #111; flex: none; }
.pm { height: 26px; display: flex; align-items: center; gap: 7px; padding-left: 7px; flex: none; }
.navtree { flex: 1; margin: 0 2px 0 2px; border: 1px solid #a8a8a8; background: #fff; padding-top: 1px; overflow: hidden; font-family: "Noto Sans CJK SC", sans-serif; }
.nrow { height: 16px; display: flex; align-items: center; position: relative; white-space: nowrap; }
.nrow.top { padding-left: 23px; }
.nrow.top .lab { margin-left: 5px; }
.nrow.child { padding-left: 43px; }
.nrow.child .lab { margin-left: 4px; }
.nrow.child::before { content: ""; position: absolute; left: 31px; top: 0; bottom: 0; border-left: 1px dotted #777; }
.nrow.child.last::before { bottom: 8px; }
.nrow.child::after { content: ""; position: absolute; left: 31px; top: 8px; width: 11px; border-top: 1px dotted #777; }
.nrow .lab.sel { background: #d8d8d8; padding-right: 3px; }
.chev { position: absolute; left: 8px; top: 4px; width: 5px; height: 5px; border-right: 1.500px solid #888; border-bottom: 1.500px solid #888; transform: rotate(-45deg); }
.chev.open { transform: rotate(45deg); top: 2px; border-color: #444; }
.work { flex: 1; display: flex; flex-direction: column; margin-left: 5px; min-width: 0; }
.workbody { display: flex; flex: 1; min-height: 0; }
.list { width: 183px; flex: none; font-family: "Noto Sans CJK SC", sans-serif; display: flex; flex-direction: column; border-right: 1px solid #a8a8a8; background: #f4f4f4; }
.searchrow { height: 32px; display: flex; align-items: center; gap: 4px; padding-left: 1px; background: #f0f0f0; }
.search { width: 156px; height: 22px; border: 1px solid #888; box-sizing: border-box; background: #fff; color: #888; font-size: 13px; line-height: 20px; padding-left: 3px; }
.mag { margin: 4px 0 0 1px; }
.ltree { flex: 1; background: #fff; border-top: 1px solid #a8a8a8; padding-top: 1px; }
.lroot { height: 16px; display: flex; align-items: center; position: relative; padding-left: 24px; gap: 5px; }
.lroot .chev { left: 11px; }
.litem { height: 16px; display: flex; align-items: center; position: relative; padding-left: 44px; gap: 7px; }
.litem .gear { width: 12px; height: 12px; }
.litem::before { content: ""; position: absolute; left: 30px; top: 0; bottom: 0; border-left: 1px dotted #777; }
.litem.last::before { bottom: 8px; }
.litem::after { content: ""; position: absolute; left: 30px; top: 8px; width: 13px; border-top: 1px dotted #777; }
.litem.on { background: linear-gradient(#316ac5, #316ac5) 40px 0 / 52px 16px no-repeat; }
.props { flex: 1; display: flex; flex-direction: column; margin-left: 5px; min-width: 0; }
.tabs { height: 21px; display: flex; align-items: flex-end; padding: 0 0 0 1px; }
.tab { height: 19px; width: 60px; box-sizing: border-box; border: 1px solid #c8c8c8; border-bottom: 0; background: #fff; text-align: center; line-height: 18px; font-family: "Noto Sans CJK SC", sans-serif; }
.pane { flex: 1; background: #fff; margin-right: 5px; border: 1px solid #c8c8c8; border-width: 1px 1px 0 0; padding: 6px 0 0 4px; }
.grid { display: grid; font-family: "Noto Sans CJK SC", sans-serif; background: #fff; }
.pgrid { grid-template-columns: 21px 191px 127px 29px; width: 368px; grid-auto-rows: 19px; grid-template-rows: 23px; }
.gh { background: linear-gradient(#fdfdfd, #e9e9e9); border-right: 1px solid #c4c4c4; border-bottom: 1px solid #c4c4c4; display: flex; align-items: center; justify-content: center; }
.gh.val { background: linear-gradient(#fbdca0, #f2bf62); color: #660a78; }
.gc { border-right: 1px solid #c4c4c4; border-bottom: 1px solid #c4c4c4; display: flex; align-items: center; white-space: pre; overflow: hidden; }
.num { background: linear-gradient(#fafafa, #eaeaea); justify-content: center; font: 11px "Liberation Mono", monospace; }
.num.hot { background: #fbd79e; color: #7a3000; }
.name { padding-left: 20px; }
.name.blue { color: #0000e0; }
.picked { background: #0078d7; color: #fff; }
.pale { background: #d8e9f8; }
.value { padding-left: 2px; }
.add { justify-content: center; }
.chk { width: 12px; height: 12px; border: 1px solid #333; background: #fff; }
.status { height: 20px; display: flex; flex: none; gap: 2px; background: #f0f0f0; }
.st { border: 1px solid #dcdcdc; box-sizing: border-box; background: #f6f6f6; }
.s1 { width: 149px; }
.s2 { width: 79px; padding-left: 1px; font-family: "Noto Sans CJK SC", sans-serif; line-height: 18px; }
.s3 { flex: 1; }
.s4 { width: 70px; line-height: 18px; padding-left: 1px; }
.taskbar { height: 40px; flex: none; display: flex; position: relative; z-index: 5; background: rgba(0, 0, 0, .86); color: #fff; }
.start { width: 48px; background: #000; display: flex; align-items: center; justify-content: center; }
.win { width: 16px; height: 16px; }
.cortana { width: 344px; background: #333; display: flex; align-items: center; color: #8c8c8c; font: 13px "Noto Sans CJK SC", sans-serif; position: relative; padding-left: 10px; box-sizing: border-box; }
.ring { width: 13px; height: 13px; border: 3px solid #ddd; border-radius: 50%; margin-right: 6px; }
.micic { width: 14px; height: 22px; position: absolute; right: 13px; top: 9px; }
.pins { display: flex; width: 588px; }
.pinc { width: 48px; height: 40px; flex: none; display: flex; align-items: center; justify-content: center; position: relative; box-sizing: border-box; }
.pinc.on::after { content: ""; position: absolute; left: 4px; right: 4px; bottom: 0; height: 3px; background: #76b9ed; }
.pinc.active { background: rgba(255, 255, 255, .2); }
.pinc.active::after { left: 0; right: 0; }
.pinic { width: 25px; height: 25px; }
.tray { width: 317px; background: #071013; display: flex; align-items: center; padding-left: 40px; box-sizing: border-box; font: 12px "Noto Sans CJK SC", sans-serif; }
.cpu { width: 60px; display: flex; flex-direction: column; align-items: center; line-height: 19px; font-size: 12px; color: #e8e8e8; margin-right: 12px; flex: none; }
.upchev { width: 8px; height: 8px; border-left: 1px solid #fff; border-top: 1px solid #fff; transform: rotate(45deg); margin: 6px 10px 0 4px; flex: none; }
.tr { width: 17px; height: 18px; margin-right: 7px; flex: none; }
.zh { font-size: 14px; margin-right: 13px; }
.clock { display: flex; flex-direction: column; align-items: center; width: 56px; line-height: 19px; margin-left: 2px; flex: none; white-space: nowrap; color: #e8e8e8; }
.notif { flex: 1; background: #000; display: flex; align-items: center; padding-left: 26px; }
.notif .tr { width: 19px; height: 19px; margin: 0; }
.dialog { position: absolute; left: 235px; top: 309px; width: 745px; height: 459px; box-sizing: border-box; border: 1px solid #4c94d4; background: #f0f0f0; z-index: 2; overflow: hidden; font-family: "Noto Sans CJK SC", sans-serif; }
.dtitle { height: 25px; background: #fff; display: flex; align-items: center; justify-content: space-between; padding: 0 10px 3px 3px; box-sizing: border-box; }
.dx { width: 11px; height: 11px; color: #222; margin-top: 3px; }
.dbody { display: flex; }
.dleft { width: 490px; flex: none; }
.dsel { display: flex; align-items: center; padding: 17px 0 0 24px; height: 21px; gap: 5px; }
.dlabel { width: 90px; flex: none; }
.select { width: 144px; height: 21px; border: 1px solid #999; box-sizing: border-box; display: flex; align-items: center; justify-content: space-between; padding: 0 5px 0 2px; background: #e4e4e4; }
.shapes { margin: 19px 0 0 9px; width: 481px; height: 380px; box-sizing: border-box; border: 1px solid #dcdcdc; position: relative; padding: 10px 0 0 4px; }
.glabel { position: absolute; left: 6px; top: -8px; background: #f0f0f0; padding-right: 2px; line-height: 14px; }
.tgrid { display: grid; grid-template-columns: repeat(3, 154px); grid-template-rows: 144px 145px; gap: 3px 4px; }
.tcell { background: #f4f4f4; border: 1px solid; border-color: #fff #999 #999 #fff; box-sizing: border-box; display: flex; align-items: center; justify-content: center; }
.tcell.chosen { background: #0ff; }
.th { width: 140px; height: 139px; background: #008080; display: block; }
.bigth { width: 210px; height: 208px; background: #008080; display: block; margin-left: 7px; }
.wl { stroke: #fff; stroke-width: 2.700; fill: none; shape-rendering: crispEdges; }
.cy { stroke: #0ff; stroke-width: 6; fill: none; shape-rendering: crispEdges; }
.bigth .wl { stroke-width: 2; }
.bigth .cy { stroke-width: 4; }
.th text, .bigth text { font-family: "Liberation Mono", "Noto Sans CJK SC", monospace; }
.dright { flex: 1; padding-left: 16px; }
.pframe { margin: 9px 0 14px 8px; width: 216px; height: 266px; box-sizing: border-box; border: 2px solid #a8a8ae; background: #fff; border-bottom-width: 1px; }
.dgrid { grid-template-columns: 21px 91px 99px; width: 211px; grid-template-rows: 23px; grid-auto-rows: 19px; }
.dn { padding-left: 2px; }
.dv { padding-left: 2px; font: 11px "Liberation Sans", sans-serif; }
.bigbox { position: relative; border-top: 1px solid #dcdcdc; border-left: 1px solid #dcdcdc; padding-top: 9px; height: 300px; box-sizing: border-box; }
.glabel.big { left: 7px; }
.pwin { position: absolute; left: 1075px; top: 419px; width: 270px; height: 283px; box-sizing: border-box; border: 1px solid #555; background: linear-gradient(#b6c5d6, #d6e4f2 40px); padding: 30px 8px 8px; z-index: 1; }
.ptitle { position: absolute; left: 8px; top: 10px; color: #999; font-size: 12px; font-family: "Noto Sans CJK SC", sans-serif; }
.canvas { display: block; width: 252px; height: 242px; background: #000; border: 1px solid #eef; box-sizing: border-box; }
.pw { stroke: #fff; stroke-width: 2.700; fill: none; shape-rendering: crispEdges; }
.pc { stroke: #0ff; stroke-width: 5.500; fill: none; stroke-linejoin: round; }
.pt { font-family: "Liberation Sans", "Noto Sans CJK SC", sans-serif; fill: #fff; text-anchor: middle; dominant-baseline: central; }
.pt.red { fill: #e00000; }
.pt.ser { font-family: "Liberation Serif", "Noto Sans CJK SC", serif; }
.ime { position: absolute; left: 999px; top: 0; width: 190px; height: 50px; z-index: 6; }
.pill { position: absolute; left: 10px; top: 22px; width: 118px; height: 26px; background: #f2f2f2; border-radius: 0 16px 16px 0; box-shadow: 0 3px 8px rgba(0, 0, 0, .35); display: flex; align-items: center; }
.arrow { color: #2a9a3a; font-weight: 700; margin-left: 40px; font-size: 11px; }
.speed { font: 9px "Noto Sans", sans-serif; margin-left: 18px; margin-top: 4px; color: #222; }
.bluedot { position: absolute; right: 5px; top: -4px; width: 18px; height: 18px; border-radius: 50%; background: #2a6fd0; }
.ball { position: absolute; left: 0; top: 2px; width: 47px; height: 47px; box-sizing: border-box; border-radius: 50%; background: #3bb854; border: 3px solid #e4e4e4; box-shadow: 0 2px 6px rgba(0, 0, 0, .4); text-align: center; color: #dff5e2; font: 8px/52px "Liberation Sans", sans-serif; }
.imebar { position: absolute; left: 27px; top: 3px; width: 158px; height: 23px; box-sizing: border-box; background: #f6f9fd; border: 1px solid #cfdbe8; display: flex; align-items: center; padding-left: 7px; color: #1c7ed0; gap: 6px; }
.cn { font: 700 14px "Noto Sans CJK SC", sans-serif; }
.imei { font: 700 13px "Liberation Sans", sans-serif; width: 14px; white-space: nowrap; margin-right: 2px; }
.ii { width: 15px; height: 15px; flex: none; margin-right: 1px; }
.ii.mic { margin-right: 3px; }
.ii.kb { width: 16px; margin-right: 4px; }
.slogo { position: absolute; left: 0; top: 1px; width: 27px; height: 27px; }
.rings { position: absolute; left: 0; top: 0; pointer-events: none; z-index: 4; }
.rings ellipse { fill: none; stroke: #f00; stroke-width: 3; }
</style>
